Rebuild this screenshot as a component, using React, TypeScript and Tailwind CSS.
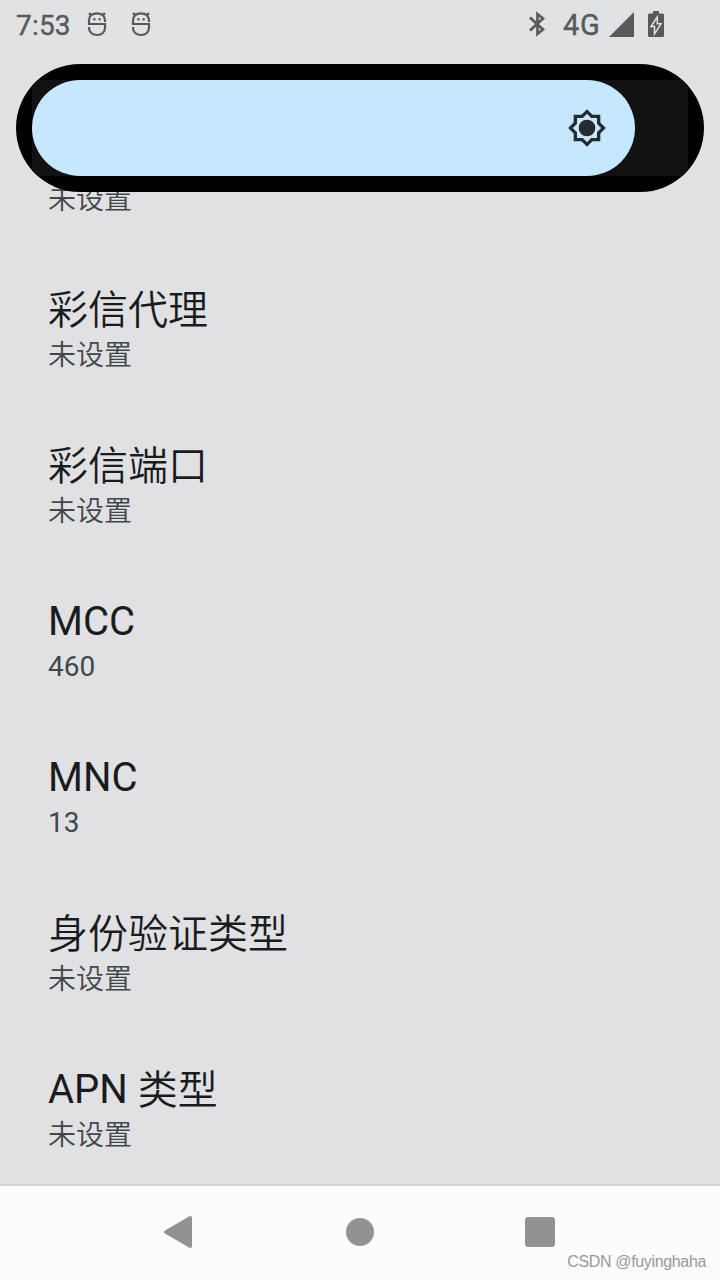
const settings = [
  { title: '彩信代理', value: '未设置' },
  { title: '彩信端口', value: '未设置' },
  { title: 'MCC', value: '460' },
  { title: 'MNC', value: '13' },
  { title: '身份验证类型', value: '未设置' },
  { title: 'APN 类型', value: '未设置' },
];

/** Sets Chinese runs slightly lighter than the Latin text beside them. */
function MixedText({ text, runClass }: { text: string; runClass: string }) {
  return text
    .split(/([\u4e00-\u9fff]+)/)
    .filter(Boolean)
    .map((run, i) => (
      <span key={i} className={/[\u4e00-\u9fff]/.test(run) ? runClass : undefined}>
        {run}
      </span>
    ));
}

function DebugIcon() {
  return (
    <svg width="20" height="26" viewBox="0 0 20 26" fill="none" stroke="#58595b" strokeWidth="2.200">
      <path d="M18 11V9.500C18 5 15 2.300 10 2.300S2 5 2 9.500V13H18V16.500C18 21 14.800 24 10 24S2 21 2 16.500V16" />
      <path d="M4.600 5 2.200 2M15.400 5l2.400-3" strokeWidth="2.600" />
      <circle cx="7.400" cy="8.200" r="1.200" fill="#58595b" stroke="none" />
      <circle cx="12.600" cy="8.200" r="1.200" fill="#58595b" stroke="none" />
    </svg>
  );
}

function StatusBar() {
  return (
    <div className="flex h-12 items-center text-[28px] leading-[48px] text-[#58595b] [-webkit-text-stroke:0.4px_#58595b]">
      <span className="ml-4 w-[71px] shrink-0 pt-[3px] tracking-[0.2px]">7:53</span>
      <div className="flex shrink-0 gap-6">
        <DebugIcon />
        <DebugIcon />
      </div>
      <svg className="ml-[377px] shrink-0" width="18" height="26" viewBox="0 0 18 26" fill="none" stroke="#58595b" strokeWidth="2.700">
        <path d="M2 6.500 15 18.500 9.500 23V3L15 7.500 2 19.500" />
      </svg>
      <span className="ml-[17px] w-[46px] shrink-0 pt-px text-[29px] tracking-[0.6px]">4G</span>
      <svg className="shrink-0" width="25" height="25" viewBox="0 0 25 25">
        <path d="M25 0v25H0z" fill="#58595b" />
      </svg>
      <svg className="ml-[14px] shrink-0" width="16" height="26" viewBox="0 0 16 26">
        <path d="M5 0h6v2.500h3.500q1.500 0 1.500 1.500v20.500q0 1.500-1.500 1.500h-13Q0 26 0 24.500V4q0-1.500 1.500-1.500H5z" fill="#58595b" />
        <path d="M9.300 6 3 15.500h3.500V23L13 12.800H9.300z" fill="#58595b" stroke="#e1e2e4" strokeWidth="1.500" />
      </svg>
    </div>
  );
}

function BrightnessSlider() {
  return (
    <div className="relative z-10 mx-4 mt-4 h-32 shrink-0 overflow-hidden rounded-full bg-black p-4">
      <div className="h-24 bg-[#111111]">
        <div className="flex h-24 w-[603px] items-center justify-end rounded-full bg-[#c5e8ff] pr-[28px]">
          <svg width="40" height="40" viewBox="0 0 24 24" fill="#252b2e">
            <path
              fillRule="evenodd"
              d="M20 8.690V4h-4.690L12 .690 8.690 4H4v4.690L.690 12 4 15.310V20h4.690L12 23.310 15.310 20H20v-4.690L23.310 12zM18 14.480V18h-3.520L12 20.480 9.520 18H6v-3.520L3.520 12 6 9.520V6h3.520L12 3.520 14.480 6H18v3.520L20.480 12z"
            />
            <circle cx="12" cy="12" r="5" />
          </svg>
        </div>
      </div>
    </div>
  );
}

export default function App() {
  return (
    <div className="flex h-[1280px] w-[720px] flex-col overflow-hidden bg-[#e1e1e3] font-['Roboto','Noto_Sans_CJK_SC',sans-serif]">
      <header className="h-40 shrink-0 bg-[#e1e2e4]">
        <StatusBar />
        <BrightnessSlider />
      </header>

      <main className="h-[1024px] shrink-0 overflow-hidden px-12 pt-[23px]">
        <p className="mb-[38px] h-[33px] text-[28px] font-[350] leading-[33px] text-[#40484c]">未设置</p>
        {settings.map((item) => (
          <section key={item.title} className="h-[156px] pt-8">
            <h2 className="text-[40px] leading-[48px] text-[#191c1e]">
              <MixedText text={item.title} runClass="align-[-1px] font-[350]" />
            </h2>
            <p className="mt-1 text-[28px] leading-[33px] text-[#40484c]">
              <MixedText text={item.value} runClass="font-[350]" />
            </p>
          </section>
        ))}
      </main>

      <nav className="relative flex h-24 shrink-0 items-center border-t-2 border-[#d1d1d3] bg-[#fcfcfc] pb-[2px]">
        <svg className="ml-[164px]" width="28" height="32" viewBox="0 0 28 32">
          <path d="M1 14.500 25 .500Q28-.800 28 2v28q0 2.800-3 1.500L1 17.500Q-1 16 1 14.500z" fill="#929292" />
        </svg>
        <div className="ml-[154px] size-7 rounded-full bg-[#929292]" />
        <div className="ml-[151px] size-[30px] rounded-[3px] bg-[#929292]" />
        <span className="absolute right-[14px] bottom-[8px] font-['Liberation_Sans',sans-serif] text-[16px] leading-5 tracking-[-0.35px] text-[#999999]">
          CSDN @fuyinghaha
        </span>
      </nav>
    </div>
  );
}
